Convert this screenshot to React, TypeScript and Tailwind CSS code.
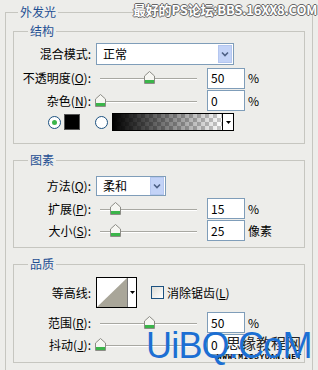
import React from "react";

const FONT = "font-['SimSun','Noto_Sans_CJK_SC','Liberation_Sans',sans-serif]";

function Thumb() {
  return (
    <svg width="11" height="13" viewBox="0 0 11 13">
      <path d="M0.5 5 L5.5 0.5 L10.5 5 V12.5 H0.5 Z" fill="#f6f6f2" stroke="#8c8c86" />
      <rect x="1" y="9" width="9" height="3" fill="#3bb54a" />
    </svg>
  );
}

function Slider({ value }: { value: number }) {
  return (
    <div className="relative w-[110px] h-[14px]">
      <div className="absolute left-[3px] top-[7px] w-[97px] h-[1px] bg-[#a8a8a2]" />
      <div className="absolute left-[3px] top-[8px] w-[97px] h-[1px] bg-white" />
      <div className="absolute top-0" style={{ left: 3 + value * 97 - 5 }}>
        <Thumb />
      </div>
    </div>
  );
}

function Field({ v }: { v: string }) {
  return (
    <div className="w-[38px] h-[21px] border border-[#7f9db9] bg-white pl-[3px] flex items-center text-[12px] leading-none">
      {v}
    </div>
  );
}

function Label({ children }: { children: React.ReactNode }) {
  return <div className="w-[78px] text-right pr-[1px] shrink-0">{children}</div>;
}

function DropBtn() {
  return (
    <div className="w-[14px] h-[18px] bg-[#c3d3f7] border border-[#b4c6ef] flex items-center justify-center">
      <svg width="8" height="6" viewBox="0 0 8 6">
        <path d="M1 1.5 L4 4.5 L7 1.5" fill="none" stroke="#4d6185" strokeWidth="1.6" />
      </svg>
    </div>
  );
}

function SliderRow({ label, value, text, unit, cls }: { label: React.ReactNode; value: number; text: string; unit: string; cls: string }) {
  return (
    <div className={`flex items-center ${cls}`}>
      <Label>{label}</Label>
      <div className="ml-[5px]">
        <Slider value={value} />
      </div>
      <Field v={text} />
      <span className="ml-[3px]">{unit}</span>
    </div>
  );
}

function Group({ title, cls, children }: { title: string; cls: string; children: React.ReactNode }) {
  return (
    <fieldset className={`border border-[#c6c6c0] ml-[7px] mr-[7px] ${cls}`}>
      <legend className="ml-[14px] px-[2px] text-[12px] leading-[14px] text-[#1f4f93]">{title}</legend>
      {children}
    </fieldset>
  );
}

export default function App() {
  return (
    <div className={`relative w-[318px] h-[370px] overflow-hidden bg-[#ededea] text-[12px] leading-[14px] text-black ${FONT}`}>
      <fieldset className="border border-[#c6c6c0] ml-[5px] mr-[5px] mt-[5px] pb-[20px]">
        <legend className="ml-[12px] px-[2px] text-[12px] leading-[14px] text-[#1f4f93]">外发光</legend>

        <Group title="结构" cls="mt-[5px] pt-[5px] pb-[12px]">
          <div className="flex items-center h-[22px]">
            <Label>混合模式:</Label>
            <div className="ml-[4px] w-[138px] h-[22px] border border-[#7f9db9] bg-white flex items-center justify-between pl-[6px] pr-[1px]">
              <span>正常</span>
              <DropBtn />
            </div>
          </div>
          <SliderRow cls="mt-[2px] h-[22px]" label={<>不透明度(<u>O</u>):</>} value={0.5} text="50" unit="%" />
          <SliderRow cls="mt-[1px] h-[21px]" label={<>杂色(<u>N</u>):</>} value={0} text="0" unit="%" />
          <div className="mt-[2px] h-[18px] flex items-center pl-[34px]">
            <div className="w-[13px] h-[13px] rounded-full border border-[#1c5180] bg-white flex items-center justify-center">
              <div className="w-[5px] h-[5px] rounded-full bg-[#3bb54a]" />
            </div>
            <div className="ml-[3px] w-[16px] h-[16px] bg-black border border-[#555]" />
            <div className="ml-[15px] w-[13px] h-[13px] rounded-full border border-[#1c5180] bg-white" />
            <div className="ml-[4px] w-[122px] h-[18px] border border-black flex">
              <div className="flex-1 bg-[linear-gradient(to_right,#000,rgba(0,0,0,0)),repeating-conic-gradient(#c9c9c9_0%_25%,#ffffff_0%_50%)] bg-[length:100%_100%,8px_8px]" />
              <div className="w-[11px] border-l border-black bg-white flex items-center justify-center">
                <svg width="5" height="3" viewBox="0 0 5 3"><path d="M0 0 H5 L2.5 3 Z" fill="#000" /></svg>
              </div>
            </div>
          </div>
        </Group>

        <Group title="图素" cls="mt-[9px] pt-[9px] pb-[6px]">
          <div className="flex items-center h-[20px]">
            <Label>方法(<u>Q</u>):</Label>
            <div className="ml-[4px] w-[70px] h-[20px] border border-[#7f9db9] bg-white flex items-center justify-between pl-[6px] pr-[1px]">
              <span>柔和</span>
              <DropBtn />
            </div>
          </div>
          <SliderRow cls="mt-[2px] h-[21px]" label={<>扩展(<u>P</u>):</>} value={0.15} text="15" unit="%" />
          <SliderRow cls="mt-[1px] h-[21px]" label={<>大小(<u>S</u>):</>} value={0.15} text="25" unit="像素" />
        </Group>

        <Group title="品质" cls="mt-[9px] pt-[6px] pb-[7px]">
          <div className="flex items-center h-[31px]">
            <Label>等高线:</Label>
            <div className="ml-[4px] w-[41px] h-[31px] border border-black bg-white flex">
              <svg width="30" height="29" viewBox="0 0 30 29" className="block">
                <path d="M0 29 L30 0 V29 Z" fill="#a9a699" />
              </svg>
              <div className="flex-1 border-l border-[#777] flex items-center justify-center">
                <svg width="5" height="3" viewBox="0 0 5 3"><path d="M0 0 H5 L2.5 3 Z" fill="#000" /></svg>
              </div>
            </div>
            <div className="ml-[14px] w-[13px] h-[13px] border border-[#1c5180] bg-[linear-gradient(135deg,#dcdcd6,#ffffff)]" />
            <span className="ml-[3px]">消除锯齿(<u>L</u>)</span>
          </div>
          <SliderRow cls="mt-[4px] h-[21px]" label={<>范围(<u>R</u>):</>} value={0.5} text="50" unit="%" />
          <SliderRow cls="mt-[1px] h-[21px]" label={<>抖动(<u>J</u>):</>} value={0} text="0" unit="" />
        </Group>
      </fieldset>

      <div className="absolute left-[133px] top-[2px] text-[13px] leading-[16px] font-bold tracking-[-0.2px] text-white [text-shadow:1px_0_#666,-1px_0_#666,0_1px_#666,0_-1px_#666]">
        最好的PS论坛:BBS.16XX8.COM
      </div>

      <div className="absolute left-[226px] top-[334px] text-[15px] leading-[18px] text-[#222]">思缘教程网</div>
      <div className="absolute left-[217px] top-[352px] text-[8px] leading-[9px] font-bold tracking-[0.5px] text-black font-['Liberation_Mono',monospace]">
        WWW.MISSYUAN.NET
      </div>
      <div className="absolute left-[146px] top-[326px] text-[36px] leading-[40px] tracking-[-0.8px] text-[#1c6fd3] font-['Liberation_Sans',sans-serif]">
        UiBQ.CoM
      </div>
    </div>
  );
}
